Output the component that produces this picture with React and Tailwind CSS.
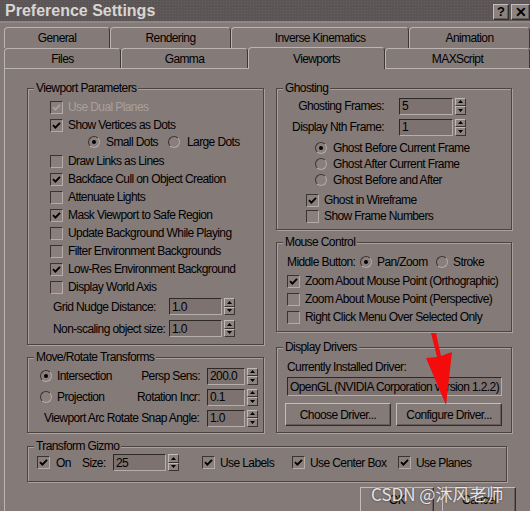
import React from 'react';

// Old-school 3ds max "Preference Settings" dialog, Viewports tab

function Check({ checked, disabled }) {
  return (
    <span className="flex h-[13px] w-[13px] shrink-0 items-center justify-center border border-t-[#3a3331] border-l-[#3a3331] border-r-[#b3aba8] border-b-[#b3aba8] bg-[#8a7f7c]">
      {checked && (
        <svg width="9" height="9" viewBox="0 0 9 9">
          <path d="M1 4.2 L3.4 6.6 L8 1.8" fill="none" stroke={disabled ? '#a8a09e' : '#000'} strokeWidth="1.9" />
        </svg>
      )}
    </span>
  );
}

function Radio({ on }) {
  return (
    <span className="flex h-[12px] w-[12px] shrink-0 items-center justify-center rounded-full border border-t-[#3a3331] border-l-[#3a3331] border-r-[#b3aba8] border-b-[#b3aba8] bg-[#8a7f7c]">
      {on && <span className="h-[4px] w-[4px] rounded-full bg-black" />}
    </span>
  );
}

function Field({ value, className }) {
  return (
    <span className={`flex h-[17px] shrink-0 items-center border border-t-[#2f2928] border-l-[#2f2928] border-r-[#b6aeab] border-b-[#b6aeab] bg-[#7d7270] pl-[2px] ${className}`}>
      {value}
    </span>
  );
}

function Spin() {
  return (
    <span className="ml-[2px] flex h-[17px] w-[11px] shrink-0 flex-col">
      <span className="flex flex-1 items-center justify-center border border-t-[#c2bab8] border-l-[#c2bab8] border-r-[#3a3331] border-b-[#3a3331] bg-[#8c8280]">
        <svg width="5" height="3" viewBox="0 0 5 3"><path d="M0 3 L2.5 0 L5 3Z" fill="#000" /></svg>
      </span>
      <span className="flex flex-1 items-center justify-center border border-t-[#c2bab8] border-l-[#c2bab8] border-r-[#3a3331] border-b-[#3a3331] bg-[#8c8280]">
        <svg width="5" height="3" viewBox="0 0 5 3"><path d="M0 0 L2.5 3 L5 0Z" fill="#000" /></svg>
      </span>
    </span>
  );
}

function Button({ children, className }) {
  return (
    <div className={`flex items-center justify-center border border-t-[#c4bcba] border-l-[#c4bcba] border-r-[#332d2c] border-b-[#332d2c] shadow-[inset_-1px_-1px_0_#665d5b] ${className}`}>
      {children}
    </div>
  );
}

function Group({ title, className, children }) {
  return (
    <fieldset className={`border border-[#4b4442] shadow-[inset_1px_1px_0_#aaa19f,1px_1px_0_#aaa19f] ${className}`}>
      <legend className="ml-[6px] bg-[#847a78] px-[2px] leading-[14px]">{title}</legend>
      {children}
    </fieldset>
  );
}

function CheckRow({ label, checked, disabled, className }) {
  return (
    <div className={`flex items-center ${className}`}>
      <Check checked={checked} disabled={disabled} />
      <span className={`ml-[5px] ${disabled ? 'text-[#a8a09e]' : ''}`}>{label}</span>
    </div>
  );
}

function Tab({ label, className }) {
  return (
    <div className={`flex items-center justify-center rounded-t-[4px] border border-b-0 border-t-[#bcb4b2] border-l-[#bcb4b2] border-r-[#3d3634] bg-[#847a78] ${className}`}>
      {label}
    </div>
  );
}

export default function App() {
  return (
    <div className="relative h-[511px] w-[530px] overflow-hidden bg-[#847a78] font-['Liberation_Sans',Arial,sans-serif] text-[12px] tracking-[-0.6px] text-black">
      {/* Title bar */}
      <div className="flex h-[23px] items-center justify-between border-b-2 border-[#8f8785] bg-[#5b5655] bg-[radial-gradient(#686362_1px,transparent_1px)] bg-[length:3px_3px] pl-[5px]">
        <span className="text-[16px] font-bold tracking-normal text-[#d9d5d3]">Preference Settings</span>
        <div className="flex gap-[2px] self-end pb-[1px]">
          <Button className="h-[16px] w-[16px] bg-[#8c8280] text-[13px] font-bold tracking-normal">?</Button>
          <Button className="h-[16px] w-[19px] bg-[#8c8280] text-[14px] font-bold tracking-normal">✕</Button>
        </div>
      </div>

      {/* Tabs */}
      <div className="pt-[4px]">
        <div className="flex h-[21px] pl-[4px]">
          <Tab label="General" className="w-[106px]" />
          <Tab label="Rendering" className="w-[121px]" />
          <Tab label="Inverse Kinematics" className="w-[178px]" />
          <Tab label="Animation" className="flex-1" />
        </div>
        <div className="flex h-[20px] items-end pl-[4px]">
          <Tab label="Files" className="h-[20px] w-[117px]" />
          <Tab label="Gamma" className="h-[20px] w-[127px]" />
          <Tab label="Viewports" className="relative top-[1px] z-10 h-[22px] w-[137px]" />
          <Tab label="MAXScript" className="h-[20px] flex-1" />
        </div>
      </div>

      {/* Page */}
      <div className="ml-[4px] h-[460px] border-l border-t border-[#bcb4b2] pl-[22px]">
        <div className="flex gap-[12px] pt-[12px]">
          {/* Left column */}
          <div className="flex w-[237px] flex-col gap-[5px]">
            <Group title="Viewport Parameters" className="h-[264px]">
              <div className="flex flex-col pl-[22px] pt-[3px]">
                <CheckRow label="Use Dual Planes" checked disabled className="h-[18px]" />
                <CheckRow label="Show Vertices as Dots" checked className="h-[18px]" />
                <div className="flex h-[16px] items-center pl-[38px]">
                  <div className="flex w-[80px] items-center">
                    <Radio on />
                    <span className="ml-[6px]">Small Dots</span>
                  </div>
                  <Radio />
                  <span className="ml-[7px]">Large Dots</span>
                </div>
                <CheckRow label="Draw Links as Lines" className="mt-[2px] h-[18px]" />
                <CheckRow label="Backface Cull on Object Creation" checked className="h-[18px]" />
                <CheckRow label="Attenuate Lights" className="h-[18px]" />
                <CheckRow label="Mask Viewport to Safe Region" checked className="h-[18px]" />
                <CheckRow label="Update Background While Playing" className="h-[18px]" />
                <CheckRow label="Filter Environment Backgrounds" className="h-[18px]" />
                <CheckRow label="Low-Res Environment Background" checked className="h-[18px]" />
                <CheckRow label="Display World Axis" className="h-[18px]" />
              </div>
              <div className="mt-[2px] flex h-[17px] items-center pl-[25px]">
                <span className="w-[116px]">Grid Nudge Distance:</span>
                <Field value="1.0" className="w-[53px]" />
                <Spin />
              </div>
              <div className="mt-[5px] flex h-[17px] items-center pl-[25px]">
                <span className="w-[116px]">Non-scaling object size:</span>
                <Field value="1.0" className="w-[53px]" />
                <Spin />
              </div>
            </Group>

            <Group title="Move/Rotate Transforms" className="h-[83px]">
              <div className="flex flex-col pr-[5px] pt-[3px]">
                <div className="flex h-[18px] items-center">
                  <div className="flex items-center pl-[12px]">
                    <Radio on />
                    <span className="ml-[5px]">Intersection</span>
                  </div>
                  <div className="ml-auto flex items-center">
                    <span>Persp Sens:</span>
                    <Field value="200.0" className="ml-[7px] w-[38px]" />
                    <Spin />
                  </div>
                </div>
                <div className="mt-[3px] flex h-[18px] items-center">
                  <div className="flex items-center pl-[12px]">
                    <Radio />
                    <span className="ml-[5px]">Projection</span>
                  </div>
                  <div className="ml-auto flex items-center">
                    <span>Rotation Incr:</span>
                    <Field value="0.1" className="ml-[7px] w-[38px]" />
                    <Spin />
                  </div>
                </div>
                <div className="mt-[3px] flex h-[18px] items-center pl-[16px]">
                  <span>Viewport Arc Rotate Snap Angle:</span>
                  <div className="ml-auto flex items-center">
                    <Field value="1.0" className="ml-[7px] w-[38px]" />
                    <Spin />
                  </div>
                </div>
              </div>
            </Group>
          </div>

          {/* Right column */}
          <div className="flex w-[236px] flex-col">
            <Group title="Ghosting" className="h-[149px]">
              <div className="flex flex-col pt-[2px]">
                <div className="flex h-[18px] items-center">
                  <span className="w-[107px] text-right">Ghosting Frames:</span>
                  <Field value="5" className="ml-[15px] w-[54px]" />
                  <Spin />
                </div>
                <div className="mt-[3px] flex h-[18px] items-center">
                  <span className="w-[107px] text-right">Display Nth Frame:</span>
                  <Field value="1" className="ml-[15px] w-[54px]" />
                  <Spin />
                </div>
                <div className="mt-[4px] flex flex-col pl-[38px]">
                  <div className="flex h-[16px] items-center">
                    <Radio on />
                    <span className="ml-[6px]">Ghost Before Current Frame</span>
                  </div>
                  <div className="flex h-[16px] items-center">
                    <Radio />
                    <span className="ml-[6px]">Ghost After Current Frame</span>
                  </div>
                  <div className="flex h-[16px] items-center">
                    <Radio />
                    <span className="ml-[6px]">Ghost Before and After</span>
                  </div>
                </div>
                <div className="mt-[4px] flex flex-col pl-[29px]">
                  <CheckRow label="Ghost in Wireframe" checked className="h-[16px]" />
                  <CheckRow label="Show Frame Numbers" className="h-[16px]" />
                </div>
              </div>
            </Group>

            <Group title="Mouse Control" className="mt-[5px] h-[97px]">
              <div className="flex flex-col pl-[10px] pt-[5px]">
                <div className="flex h-[16px] items-center">
                  <span className="w-[73px]">Middle Button:</span>
                  <Radio on />
                  <span className="ml-[5px] w-[59px]">Pan/Zoom</span>
                  <Radio />
                  <span className="ml-[5px]">Stroke</span>
                </div>
                <CheckRow label="Zoom About Mouse Point (Orthographic)" checked className="mt-[2px] h-[18px]" />
                <CheckRow label="Zoom About Mouse Point (Perspective)" className="h-[18px]" />
                <CheckRow label="Right Click Menu Over Selected Only" className="h-[18px]" />
              </div>
            </Group>

            <Group title="Display Drivers" className="mt-[8px] h-[93px]">
              <div className="flex flex-col pt-[5px]">
                <div className="flex h-[16px] items-center pl-[10px]">Currently Installed Driver:</div>
                <div className="mt-[2px] pl-[10px]">
                  <Field value="OpenGL (NVIDIA Corporation version 1.2.2)" className="h-[19px] w-[215px]" />
                </div>
                <div className="mt-[7px] flex gap-[5px] pl-[8px]">
                  <Button className="h-[23px] w-[106px]">Choose Driver...</Button>
                  <Button className="h-[23px] w-[106px]">Configure Driver...</Button>
                </div>
              </div>
            </Group>
          </div>
        </div>

        <Group title="Transform Gizmo" className="mt-[6px] h-[43px] w-[480px]">
          <div className="flex h-[18px] items-center pl-[9px] pt-[1px]">
            <Check checked />
            <span className="ml-[6px] w-[26px]">On</span>
            <span className="w-[31px]">Size:</span>
            <Field value="25" className="w-[53px]" />
            <Spin />
            <div className="ml-[23px] flex w-[90px] items-center">
              <Check checked />
              <span className="ml-[5px]">Use Labels</span>
            </div>
            <div className="flex w-[106px] items-center">
              <Check checked />
              <span className="ml-[5px]">Use Center Box</span>
            </div>
            <div className="flex items-center">
              <Check checked />
              <span className="ml-[5px]">Use Planes</span>
            </div>
          </div>
        </Group>

        <div className="ml-[333px] mt-[5px] flex gap-[8px]">
          <Button className="h-[26px] w-[74px]">OK</Button>
          <Button className="h-[26px] w-[74px]">Cancel</Button>
        </div>
      </div>

      {/* red pointer arrow drawn over the screenshot */}
      <svg className="pointer-events-none absolute left-0 top-0" width="530" height="511" viewBox="0 0 530 511">
        <path d="M431 333 L436 333 L441 356 L452 352 L446 405 L426 358 L437 357 Z" fill="#f40c0c" />
      </svg>

      {/* watermark */}
      <div className="pointer-events-none absolute left-[371px] top-[481px] font-['Noto_Sans_CJK_SC',sans-serif] text-[17px] tracking-normal text-white/85 [text-shadow:0_0_2px_#3a3433]">
        CSDN @沐风老师
      </div>
    </div>
  );
}
